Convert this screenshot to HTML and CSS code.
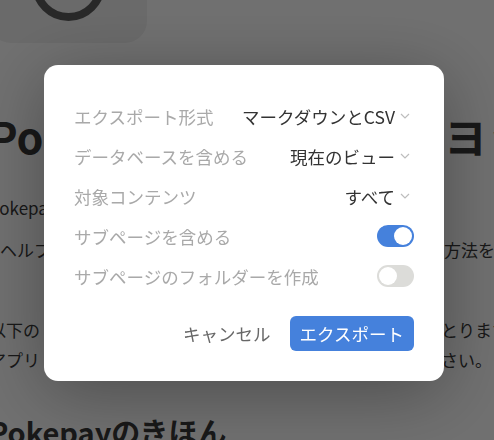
FILE: index.html
```html
<!DOCTYPE html>
<html lang="ja">
<head>
    <meta charset="UTF-8">
    <meta name="viewport" content="width=device-width, initial-scale=1.0">
    <title>Pokepay ヘルプ</title>
    <link rel="stylesheet" href="styles.css">
</head>
<body>

<div class="page">
    <div class="page-icon"><div class="page-icon-ring"></div></div>

    <div class="split title">
        <span>Pokepay</span>
        <span>ヨッ</span>
    </div>

    <div class="split text intro">
        <span>Pokepay</span>
        <span></span>
    </div>

    <div class="split text lead">
        <span>ヘルプ</span>
        <span>方法を</span>
    </div>

    <div class="block">
        <div class="split text">
            <span>以下の</span>
            <span>とります</span>
        </div>
        <div class="split text">
            <span>アプリ</span>
            <span>さい。</span>
        </div>
    </div>

    <h2 class="subtitle">Pokepayのきほん</h2>
</div>

<div class="backdrop">
    <div class="modal">
        <div class="row">
            <span class="label">エクスポート形式</span>
            <span class="select">マークダウンとCSV
                <svg class="chevron" width="10" height="6" viewBox="0 0 10 6"><polyline points="1,1 5,5 9,1" fill="none" stroke="#bdbdbd" stroke-width="1.2"/></svg>
            </span>
        </div>
        <div class="row">
            <span class="label">データベースを含める</span>
            <span class="select">現在のビュー
                <svg class="chevron" width="10" height="6" viewBox="0 0 10 6"><polyline points="1,1 5,5 9,1" fill="none" stroke="#bdbdbd" stroke-width="1.2"/></svg>
            </span>
        </div>
        <div class="row">
            <span class="label">対象コンテンツ</span>
            <span class="select">すべて
                <svg class="chevron" width="10" height="6" viewBox="0 0 10 6"><polyline points="1,1 5,5 9,1" fill="none" stroke="#bdbdbd" stroke-width="1.2"/></svg>
            </span>
        </div>
        <div class="row">
            <span class="label">サブページを含める</span>
            <span class="toggle on"><span class="knob"></span></span>
        </div>
        <div class="row">
            <span class="label">サブページのフォルダーを作成</span>
            <span class="toggle"><span class="knob"></span></span>
        </div>

        <div class="actions">
            <button class="btn-cancel">キャンセル</button>
            <button class="btn-primary">エクスポート</button>
        </div>
    </div>
</div>

</body>
</html>
```

FILE: styles.css
```css
body {
    margin: 0;
    height: 100vh;
    overflow: hidden;
    background: #ffffff;
    font-family: "Noto Sans CJK JP", "Liberation Sans", sans-serif;
    color: #383838;
}

/* page behind the dialog */
.page {
    margin-left: -11px;
}

.page-icon {
    width: 158px;
    height: 101px;
    margin-top: -58px;
    padding-top: 6px;
    box-sizing: border-box;
    border-radius: 22px;
    background: #f1f1f1;
    display: flex;
    justify-content: center;
}

.page-icon-ring {
    width: 73px;
    height: 73px;
    box-sizing: border-box;
    border: 8px solid #5c5c5c;
    border-radius: 50%;
}

.split {
    display: grid;
    grid-template-columns: 455px max-content;
    white-space: nowrap;
}

.title {
    margin-top: 66px;
    font-size: 43px;
    font-weight: bold;
    line-height: 52px;
}

.text {
    font-size: 17px;
    line-height: 28px;
}

.intro {
    margin-top: 33px;
}

.lead {
    margin-top: 14px;
    padding-left: 11px;
    grid-template-columns: 444px max-content;
}

.block {
    margin-top: 51px;
}

.block .text {
    line-height: 30px;
    grid-template-columns: 452px max-content;
}

.subtitle {
    margin: 37px 0 0;
    font-size: 29px;
    font-weight: bold;
    line-height: 38px;
    white-space: nowrap;
}

/* dialog */
.backdrop {
    position: fixed;
    top: 0;
    left: 0;
    width: 100%;
    height: 100%;
    padding: 65px 6px 0 0;
    box-sizing: border-box;
    background: rgba(0, 0, 0, 0.56);
    display: flex;
    justify-content: center;
    align-items: flex-start;
}

.modal {
    width: 400px;
    box-sizing: border-box;
    padding: 31px 30px 30px;
    border-radius: 14px;
    background: #ffffff;
    box-shadow: 0 12px 70px rgba(0, 0, 0, 0.32);
    font-size: 17.5px;
}

.row {
    height: 40px;
    display: flex;
    align-items: center;
    justify-content: space-between;
}

.label {
    color: #a9a9a9;
}

.select {
    display: flex;
    align-items: center;
    gap: 5px;
    padding-right: 4px;
    color: #333333;
}

.toggle {
    width: 37px;
    height: 22px;
    padding: 2px;
    box-sizing: border-box;
    border-radius: 11px;
    background: #dcdcd9;
    display: flex;
}

.toggle.on {
    background: #4581dc;
    justify-content: flex-end;
}

.knob {
    width: 18px;
    height: 18px;
    border-radius: 50%;
    background: #ffffff;
}

.actions {
    margin-top: 20px;
    display: flex;
    justify-content: flex-end;
    gap: 9px;
}

.actions button {
    height: 35px;
    padding: 0 10px;
    border: none;
    border-radius: 6px;
    font-family: inherit;
    font-size: 17.5px;
    cursor: pointer;
}

.btn-cancel {
    background: transparent;
    color: #676767;
}

.btn-primary {
    background: #4581dc;
    color: #ffffff;
}
```
